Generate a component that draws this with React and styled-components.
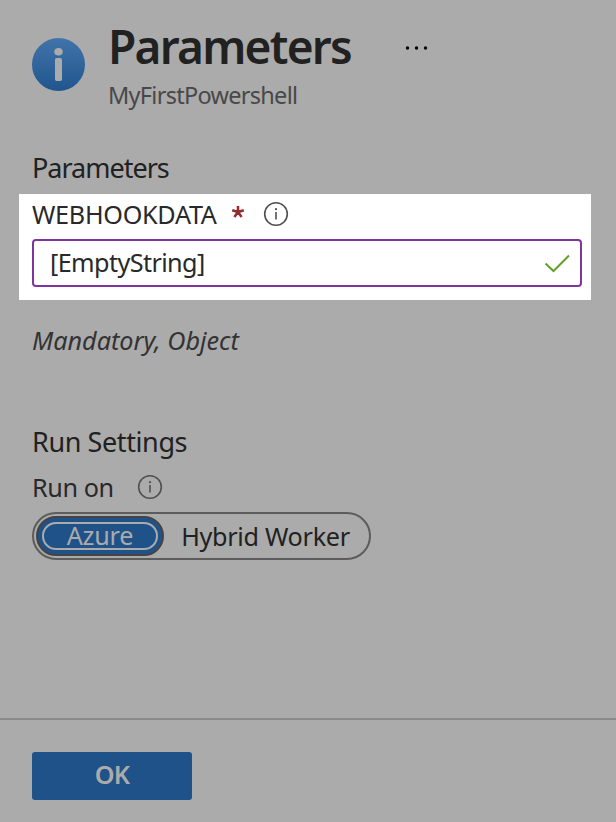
import React from "react";
import styled, { createGlobalStyle } from "styled-components";

const GlobalStyle = createGlobalStyle`
  * { box-sizing: border-box; }
  body { margin: 0; background: #ababab; font-family: "Noto Sans", "Open Sans", sans-serif; color: #222; }
  button, input { font: inherit; color: inherit; margin: 0; }
`;

const Blade = styled.main`
  width: 616px;
  height: 822px;
  display: flex;
  flex-direction: column;
  background: #ababab;
  overflow: hidden;
`;

const Header = styled.header`
  display: flex;
  height: 150px;
  padding: 16px 0 0 32px;
  svg { flex: none; }
`;

const HeaderIcon = styled.svg`
  width: 53px;
  height: 53px;
  margin-top: 22px;
`;

const Titles = styled.div`
  width: 318px;
  padding-left: 23px;
`;

const Title = styled.h1`
  margin: 0;
  font-size: 46px;
  line-height: 60px;
  font-weight: 600;
  letter-spacing: -1.75px;
  color: #212121;
  white-space: nowrap;
`;

const Subtitle = styled.div`
  margin-top: 3px;
  font-size: 23.5px;
  line-height: 32px;
  letter-spacing: -0.72px;
  color: #484848;
`;

const MoreDots = styled.svg`
  width: 26px;
  height: 6px;
  margin-top: 29px;
`;

const SectionHeading = styled.h2`
  margin: 0;
  padding-left: 32px;
  height: ${(p) => p.$height}px;
  font-size: 27px;
  line-height: 36px;
  font-weight: 400;
  letter-spacing: ${(p) => p.$spacing}px;
  color: #212121;
`;

const Highlight = styled.section`
  width: 572px;
  height: 106px;
  margin-left: 19px;
  padding: 2px 9px 0 13px;
  background: #fff;
`;

const LabelRow = styled.div`
  display: flex;
  align-items: center;
  height: ${(p) => p.$height}px;
  padding: 0 0 7px ${(p) => p.$inset || 0}px;
`;

const Label = styled.label`
  width: ${(p) => p.$width}px;
  font-size: 25.2px;
  line-height: 36px;
  letter-spacing: ${(p) => p.$spacing}px;
  color: #292929;
  white-space: nowrap;
`;

const Required = styled.svg`
  width: 14px;
  height: 14px;
  margin: 0 18px 5px 0;
`;

const InfoSvg = styled.svg`
  width: 26px;
  height: 26px;
`;

const Field = styled.div`
  display: flex;
  align-items: center;
  height: 48px;
  width: 550px;
  padding: 0 9px 0 16px;
  border: 2px solid #8034a0;
  border-radius: 4px;
`;

const FieldInput = styled.input`
  flex: 1;
  min-width: 0;
  height: 40px;
  padding: 0 0 3px;
  border: 0;
  outline: 0;
  background: transparent;
  font-size: 25.2px;
  letter-spacing: -0.6px;
  color: #292929;
`;

const Check = styled.svg`
  width: 28px;
  height: 22px;
`;

const Hint = styled.p`
  margin: 0;
  padding: 22px 0 0 32px;
  height: 124px;
  font-size: 25.2px;
  line-height: 36px;
  font-style: italic;
  letter-spacing: 0;
  color: #333;
`;

const Toggle = styled.div`
  display: flex;
  width: 339px;
  height: 48px;
  margin-left: 32px;
  padding: 2px;
  border: 2px solid #5c5c5c;
  border-radius: 24px;
`;

const Option = styled.button`
  width: ${(p) => p.$width}px;
  height: 40px;
  padding: 0;
  border: ${(p) => (p.$selected ? "2px solid #444" : "0")};
  border-radius: 20px;
  background: ${(p) => (p.$selected ? "#20528a" : "transparent")};
  color: ${(p) => (p.$selected ? "#ababab" : "#212121")};
  font-size: 25.2px;
  line-height: 38px;
  letter-spacing: ${(p) => p.$spacing}px;
  white-space: nowrap;
`;

const FocusRing = styled.span`
  display: block;
  height: 28px;
  margin: 0 4px;
  border: 2px solid #ababab;
  border-radius: 14px;
  line-height: 22px;
`;

const Footer = styled.footer`
  margin-top: auto;
  height: 104px;
  padding: 32px;
  border-top: 2px solid #8b8b8b;
`;

const OkButton = styled.button`
  display: block;
  width: 160px;
  height: 48px;
  padding: 0 0 4px;
  border: 0;
  border-radius: 3px;
  background: #20528a;
  color: #ababab;
  font-size: 25.2px;
  font-weight: 600;
  letter-spacing: -0.8px;
`;

function InfoIcon() {
  return (
    <InfoSvg viewBox="0 0 26 26">
      <circle cx="13" cy="13" r="11.3" fill="none" stroke="#505050" strokeWidth="1.6" />
      <circle cx="13" cy="8.2" r="1.1" fill="#505050" />
      <path d="M13 11v7.5" stroke="#505050" strokeWidth="1.6" />
    </InfoSvg>
  );
}

export default function App() {
  return (
    <>
      <GlobalStyle />
      <Blade>
        <Header>
          <HeaderIcon viewBox="0 0 53 53">
            <defs>
              <linearGradient id="info-fill" x1="0" y1="0" x2="0" y2="1">
                <stop offset="0" stopColor="#4174a9" />
                <stop offset="1" stopColor="#20558e" />
              </linearGradient>
            </defs>
            <circle cx="26.5" cy="26.5" r="26.5" fill="url(#info-fill)" />
            <ellipse cx="26.5" cy="13.8" rx="4.2" ry="3.8" fill="#ababab" />
            <rect x="23" y="20" width="7" height="23" rx="1.8" fill="#ababab" />
          </HeaderIcon>
          <Titles>
            <Title>Parameters</Title>
            <Subtitle>MyFirstPowershell</Subtitle>
          </Titles>
          <MoreDots viewBox="0 0 26 6">
            <circle cx="4.5" cy="3" r="1.7" />
            <circle cx="13.5" cy="3" r="1.7" />
            <circle cx="22.5" cy="3" r="1.7" />
          </MoreDots>
        </Header>

        <SectionHeading $height={44} $spacing={-1}>Parameters</SectionHeading>
        <Highlight>
          <LabelRow $height={43}>
            <Label $width={199} $spacing={-0.3} htmlFor="webhook">WEBHOOKDATA</Label>
            <Required viewBox="0 0 14 14">
              <path d="M7 7V1M7 7L1.2 5.2M7 7L12.8 5.2M7 7L3.4 12M7 7L10.6 12" stroke="#942b2f" strokeWidth="2.5" />
            </Required>
            <InfoIcon />
          </LabelRow>
          <Field>
            <FieldInput id="webhook" defaultValue="[EmptyString]" />
            <Check viewBox="0 0 28 22">
              <path d="M2.5 11.5L10.5 19L26 3.5" fill="none" stroke="#62a02a" strokeWidth="2" />
            </Check>
          </Field>
        </Highlight>
        <Hint>Mandatory, Object</Hint>

        <SectionHeading $height={45} $spacing={-0.4}>Run Settings</SectionHeading>
        <LabelRow $height={43} $inset={32}>
          <Label $width={105} $spacing={-0.4}>Run on</Label>
          <InfoIcon />
        </LabelRow>
        <Toggle>
          <Option $selected $width={128} $spacing={-0.2}>
            <FocusRing>Azure</FocusRing>
          </Option>
          <Option $width={203} $spacing={-0.3}>Hybrid Worker</Option>
        </Toggle>

        <Footer>
          <OkButton>OK</OkButton>
        </Footer>
      </Blade>
    </>
  );
}
